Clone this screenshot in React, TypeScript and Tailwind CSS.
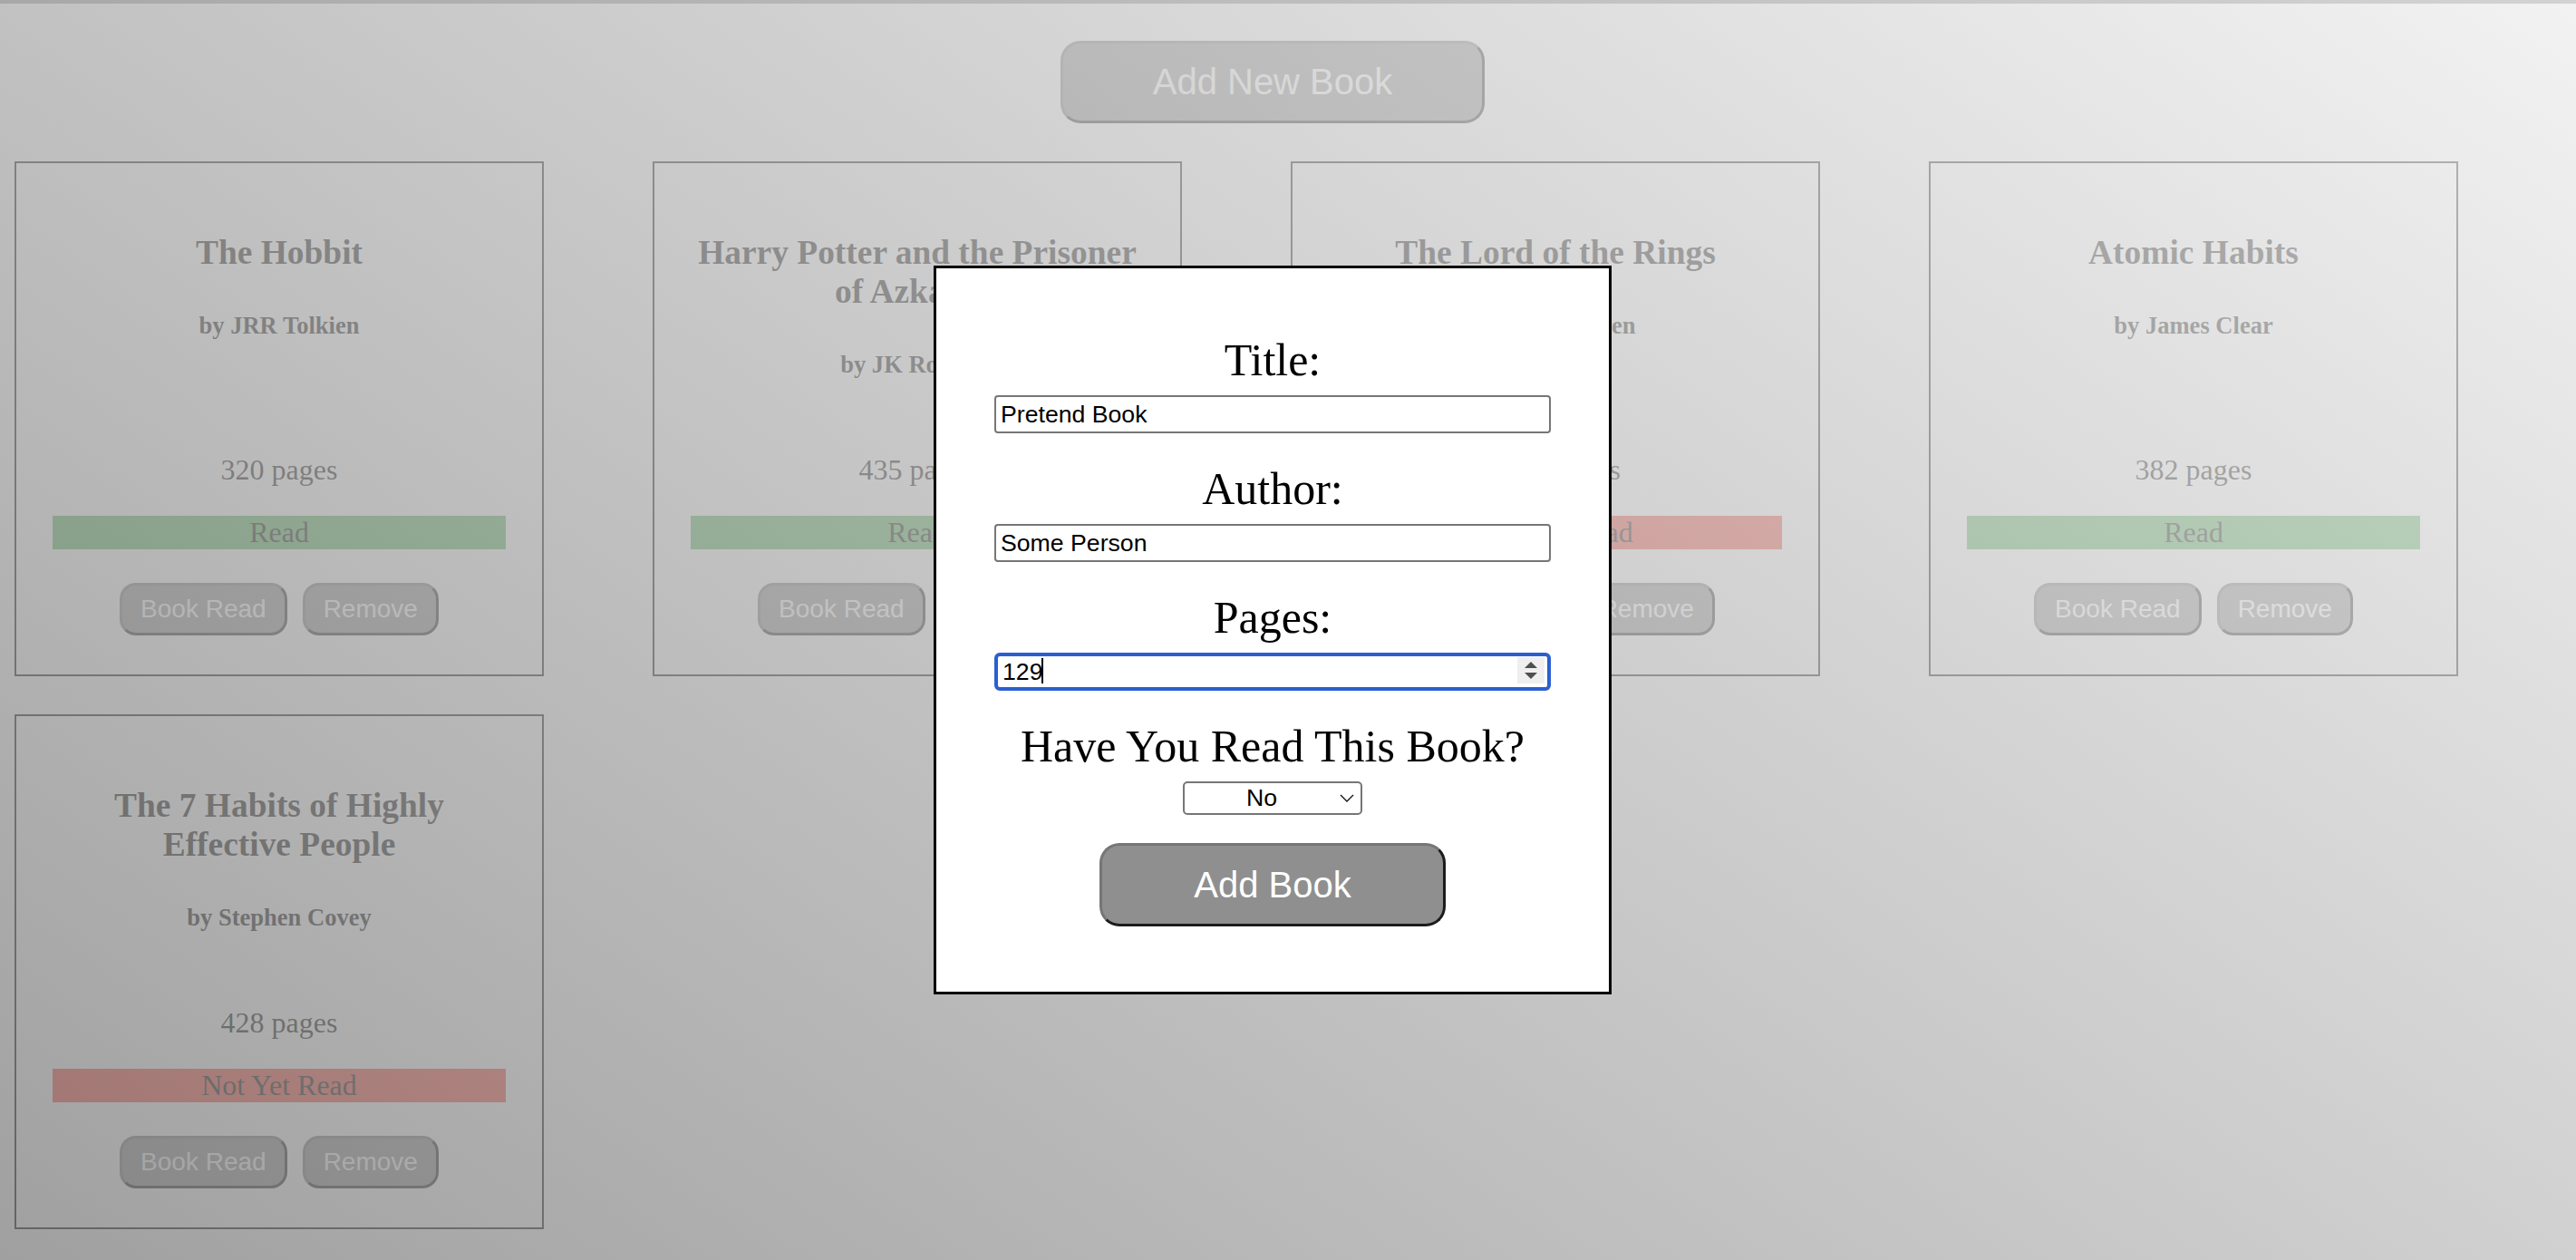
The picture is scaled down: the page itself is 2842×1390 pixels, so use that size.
import React from "react";

type Book = { title: string; author: string; pages: number; read: boolean };

const books: Book[] = [
  { title: "The Hobbit", author: "JRR Tolkien", pages: 320, read: true },
  { title: "Harry Potter and the Prisoner of Azkaban", author: "JK Rowling", pages: 435, read: true },
  { title: "The Lord of the Rings", author: "JRR Tolkien", pages: 1178, read: false },
  { title: "Atomic Habits", author: "James Clear", pages: 382, read: true },
  { title: "The 7 Habits of Highly Effective People", author: "Stephen Covey", pages: 428, read: false },
];

const serif = "font-['Liberation_Serif','Times_New_Roman',serif]";
const sans = "font-['Liberation_Sans',Arial,sans-serif]";

function Card({ b }: { b: Book }) {
  return (
    <div className={`flex h-[568px] flex-col border-2 border-black bg-white px-[40px] pt-[77px] pb-[43px] text-center text-black ${serif}`}>
      <h3 className="text-[37.44px] font-bold leading-[43px]">{b.title}</h3>
      <h5 className="mt-[44px] text-[26.56px] font-bold leading-[31px]">by {b.author}</h5>
      <div className="mt-auto">
        <p className="text-[32px] leading-[37px]">{b.pages} pages</p>
        <div
          className={`mt-[32px] h-[37px] text-[32px] leading-[37px] ${b.read ? "bg-[#4caf50]" : "bg-[#f44336]"}`}
        >
          {b.read ? "Read" : "Not Yet Read"}
        </div>
        <div className="mt-[37px] flex justify-center gap-[17px]">
          <button
            className={`rounded-[18px] border-[3px] border-t-[#767676] border-l-[#767676] border-b-[#1c1c1c] border-r-[#1c1c1c] bg-[#8f8f8f] px-[20px] py-[10px] text-[28px] leading-[32px] text-white ${sans}`}
          >
            Book Read
          </button>
          <button
            className={`rounded-[18px] border-[3px] border-t-[#767676] border-l-[#767676] border-b-[#1c1c1c] border-r-[#1c1c1c] bg-[#8f8f8f] px-[20px] py-[10px] text-[28px] leading-[32px] text-white ${sans}`}
          >
            Remove
          </button>
        </div>
      </div>
    </div>
  );
}

export default function App() {
  return (
    <div className={`relative h-[1390px] w-[2842px] overflow-hidden bg-white ${serif}`}>
      {/* page */}
      <div className="flex w-[2808px] justify-center pt-[45px]">
        <button
          className={`rounded-[22px] border-[3px] border-t-[#767676] border-l-[#767676] border-b-[#1c1c1c] border-r-[#1c1c1c] bg-[#8f8f8f] px-[99px] py-[19px] text-[40px] leading-[47px] text-white ${sans}`}
        >
          Add New Book
        </button>
      </div>
      <div className="mt-[42px] grid grid-cols-[repeat(4,584px)] gap-x-[120px] gap-y-[42px] pl-[16px]">
        {books.map((b) => (
          <Card key={b.title} b={b} />
        ))}
      </div>

      {/* overlay */}
      <div className="absolute inset-0 z-10 bg-[linear-gradient(35deg,rgba(130,130,130,0.76),rgba(238,238,238,0.76))]">
        <div className="h-[4px] bg-[rgba(0,0,0,0.13)]" />
      </div>

      {/* modal */}
      <div className="absolute top-[293px] left-[1030px] z-20 w-[748px] border-[3px] border-black bg-white px-[64px] pt-[73px] pb-[72px] text-center text-black">
        <div className="flex flex-col">
          <h2 className="mb-[11px] text-[50px] font-normal leading-[56px]">Title:</h2>
          <input
            readOnly
            value="Pretend Book"
            className={`h-[42px] w-full rounded-[4px] border-2 border-[#767676] px-[5px] text-[26.67px] text-black outline-none ${sans}`}
          />
        </div>
        <div className="mt-[33px] flex flex-col">
          <h2 className="mb-[11px] text-[50px] font-normal leading-[56px]">Author:</h2>
          <input
            readOnly
            value="Some Person"
            className={`h-[42px] w-full rounded-[4px] border-2 border-[#767676] px-[5px] text-[26.67px] text-black outline-none ${sans}`}
          />
        </div>
        <div className="mt-[33px] flex flex-col">
          <h2 className="mb-[11px] text-[50px] font-normal leading-[56px]">Pages:</h2>
          <div className="relative h-[42px] w-full">
            <input
              readOnly
              value="129"
              className={`h-[42px] w-full rounded-[6px] border-4 border-[#2b5fd1] px-[5px] text-[26.67px] text-black outline-none ${sans}`}
            />
            <span className="absolute top-[6px] left-[52px] h-[28px] w-[2px] bg-black" />
            <div className="absolute top-[5px] right-[7px] flex h-[29px] w-[30px] flex-col items-center justify-center gap-[5px] bg-[#efefef]">
              <svg width="14" height="7" viewBox="0 0 14 7">
                <polygon points="7,0 14,7 0,7" fill="#4f4f4f" />
              </svg>
              <svg width="14" height="7" viewBox="0 0 14 7">
                <polygon points="0,0 14,0 7,7" fill="#4f4f4f" />
              </svg>
            </div>
          </div>
        </div>
        <div className="mt-[33px] flex flex-col items-center">
          <h2 className="mb-[11px] w-full text-[50px] font-normal leading-[56px]">Have You Read This Book?</h2>
          <div className="relative h-[37px] w-[198px]">
            <select
              defaultValue="no"
              className={`h-[37px] w-[198px] appearance-none rounded-[5px] border-2 border-[#767676] bg-white pr-[24px] text-center text-[26.67px] leading-[31px] text-black outline-none [text-align-last:center] ${sans}`}
            >
              <option value="no">No</option>
              <option value="yes">Yes</option>
            </select>
            <svg
              className="pointer-events-none absolute top-[14px] right-[9px]"
              width="16"
              height="9"
              viewBox="0 0 16 9"
            >
              <polyline points="1,1 8,8 15,1" fill="none" stroke="#111" strokeWidth="1.3" />
            </svg>
          </div>
          <button
            className={`mt-[31px] rounded-[22px] border-[3px] border-t-[#767676] border-l-[#767676] border-b-[#1c1c1c] border-r-[#1c1c1c] bg-[#8f8f8f] px-[101px] py-[20px] text-[40px] leading-[46px] text-white ${sans}`}
          >
            Add Book
          </button>
        </div>
      </div>
    </div>
  );
}
